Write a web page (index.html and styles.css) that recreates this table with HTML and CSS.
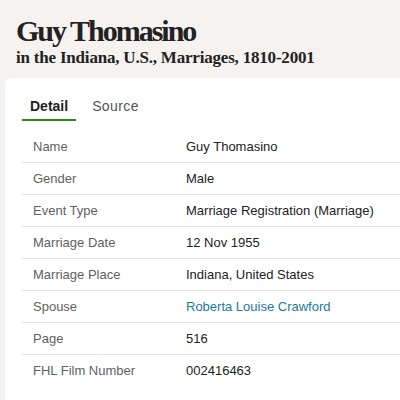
FILE: index.html
```html
<!DOCTYPE html>
<html>
<head>
<meta charset="utf-8">
<link rel="stylesheet" href="styles.css">
</head>
<body>
<header class="head">
  <h1 class="title">Guy Thomasino</h1>
  <p class="subtitle">in the Indiana, U.S., Marriages, 1810-2001</p>
</header>
<main class="card">
  <nav class="tabs">
    <span class="tab active">Detail</span>
    <span class="tab">Source</span>
  </nav>
  <table class="facts">
    <tr><th>Name</th><td>Guy Thomasino</td></tr>
    <tr><th>Gender</th><td>Male</td></tr>
    <tr><th>Event Type</th><td>Marriage Registration (Marriage)</td></tr>
    <tr><th>Marriage Date</th><td>12 Nov 1955</td></tr>
    <tr><th>Marriage Place</th><td>Indiana, United States</td></tr>
    <tr><th>Spouse</th><td><a class="link" href="#">Roberta Louise Crawford</a></td></tr>
    <tr><th>Page</th><td>516</td></tr>
    <tr><th>FHL Film Number</th><td>002416463</td></tr>
  </table>
</main>
</body>
</html>
```
FILE: styles.css
```css
html, body {
  margin: 0;
  padding: 0;
  background: #f5f2ef;
  height: 100%;
  overflow: hidden;
}
body {
  font-family: "Liberation Sans", Arial, sans-serif;
  color: #222;
}
.head {
  padding: 14px 0 0 16px;
  height: 64px;
}
.title {
  margin: 0;
  font-family: "Liberation Serif", serif;
  font-weight: bold;
  font-size: 30px;
  line-height: 34px;
  color: #222;
  letter-spacing: -2px;
}
.subtitle {
  margin: 0;
  font-family: "Liberation Serif", serif;
  font-weight: bold;
  font-size: 17px;
  line-height: 20px;
  color: #222;
  letter-spacing: -0.2px;
}
.card {
  box-sizing: border-box;
  margin-left: 5px;
  background: #fff;
  border-radius: 6px 0 0 0;
  padding: 18px 0 0 17px;
  height: calc(100vh - 78px);
}
.tabs {
  display: flex;
  gap: 8px;
  height: 25px;
}
.tab {
  font-size: 14px;
  line-height: 20px;
  color: #555;
  padding: 0 8px;
}
.tab:not(.active) {
  letter-spacing: 0.4px;
}
.tab.active {
  font-weight: bold;
  color: #222;
  border-bottom: 2px solid #2f8a12;
}
.facts {
  border-collapse: collapse;
  width: 100%;
  margin-top: 10px;
}
.facts th, .facts td {
  height: 31px;
  padding: 0;
  font-size: 13px;
  text-align: left;
  vertical-align: middle;
}
.facts tr + tr th, .facts tr + tr td {
  border-top: 1px solid #e6e4e1;
}
.facts th {
  font-weight: normal;
  color: #5f5f5f;
  width: 153px;
  padding-left: 11px;
}
.facts td {
  color: #222;
}
.link {
  color: #1a7a9a;
  text-decoration: none;
}
```
